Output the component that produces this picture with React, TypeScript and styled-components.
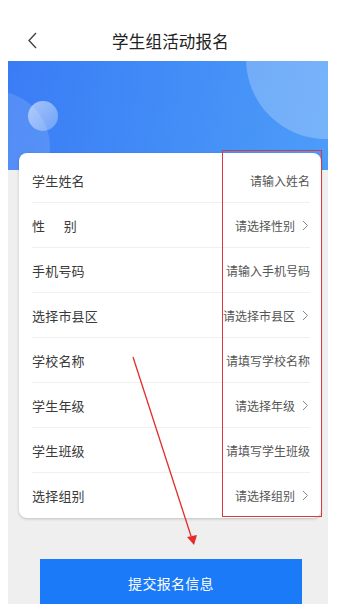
import React from "react";
import styled, { createGlobalStyle } from "styled-components";

const GlobalStyle = createGlobalStyle`
  body {
    margin: 0;
    background: #fff;
    font-family: "Noto Sans CJK SC", "Noto Sans", sans-serif;
  }
`;

const Page = styled.div`
  position: relative;
  width: 337px;
  height: 610px;
  overflow: hidden;
  background: #fff;
`;

const Header = styled.div`
  position: relative;
  height: 61px;
  display: flex;
  align-items: center;
  justify-content: center;
  box-sizing: border-box;
  padding-top: 20px;
`;

const Back = styled.div`
  position: absolute;
  left: 26px;
  top: 31px;
  width: 14px;
  height: 20px;
`;

const Title = styled.h1`
  margin: 0;
  padding-left: 4px;
  font-size: 16.5px;
  font-weight: 400;
  color: #222;
  letter-spacing: 0.2px;
`;

const Main = styled.div`
  margin: 0 9px 0 8px;
  height: 543px;
  overflow: hidden;
  background: #efefef;
`;

const Banner = styled.div`
  position: relative;
  height: 109px;
  background: linear-gradient(100deg, #3a7cf5 0%, #438ef7 55%, #4d9cf8 100%);
  overflow: hidden;

  svg {
    position: absolute;
    inset: 0;
  }
`;

const Card = styled.div`
  position: relative;
  margin: -17px 7px 0 11px;
  padding-top: 5px;
  background: #fff;
  border-radius: 8px;
  box-shadow: 0 1px 3px rgba(0, 0, 0, 0.2);
`;

const Row = styled.div<{ $last?: boolean }>`
  height: 45px;
  margin: 0 11px 0 13px;
  display: flex;
  align-items: center;
  justify-content: space-between;
  border-bottom: ${(p) => (p.$last ? "none" : "1px solid #f0f0f0")};
  box-sizing: border-box;
`;

const Label = styled.span`
  font-size: 13px;
  color: #3a3a3a;
  letter-spacing: 0.2px;
  white-space: pre;
`;

const Value = styled.span`
  display: flex;
  align-items: center;
  gap: 7px;
  font-size: 12px;
  color: #555;
`;

const Chevron = styled.svg`
  width: 7px;
  height: 11px;
  margin-right: 1px;
`;

const Submit = styled.button`
  display: block;
  margin: 41px 26px 0 32px;
  width: calc(100% - 58px);
  height: 50px;
  padding-bottom: 4px;
  border: none;
  background: #1b7af8;
  color: #fff;
  font-family: inherit;
  font-size: 14px;
  letter-spacing: 0.3px;
`;

const Highlight = styled.div`
  position: absolute;
  left: 222px;
  top: 150px;
  width: 100px;
  height: 367px;
  border: 1.6px solid #d63a40;
  box-sizing: border-box;
`;

const Pointer = styled.svg`
  position: absolute;
  left: 0;
  top: 0;
  pointer-events: none;
`;

const rows: { label: string; value: string; arrow?: boolean }[] = [
  { label: "学生姓名", value: "请输入姓名" },
  { label: "性      别", value: "请选择性别", arrow: true },
  { label: "手机号码", value: "请输入手机号码" },
  { label: "选择市县区", value: "请选择市县区", arrow: true },
  { label: "学校名称", value: "请填写学校名称" },
  { label: "学生年级", value: "请选择年级", arrow: true },
  { label: "学生班级", value: "请填写学生班级" },
  { label: "选择组别", value: "请选择组别", arrow: true },
];

const App = () => {
  return (
    <Page>
      <GlobalStyle />
      <Header>
        <Back>
          <svg width="14" height="20" viewBox="0 0 14 20">
            <path d="M10 2 L3 9.5 L10 17" fill="none" stroke="#444" strokeWidth="1.4" />
          </svg>
        </Back>
        <Title>学生组活动报名</Title>
      </Header>
      <Main>
        <Banner>
          <svg width="320" height="109" viewBox="0 0 320 109">
            <defs>
              <linearGradient id="dot" x1="0" y1="0" x2="1" y2="1">
                <stop offset="0" stopColor="#ffffff" stopOpacity="0.55" />
                <stop offset="1" stopColor="#ffffff" stopOpacity="0.25" />
              </linearGradient>
            </defs>
            <circle cx="318" cy="-2" r="80" fill="#ffffff" fillOpacity="0.24" />
            <circle cx="-14" cy="86" r="56" fill="#ffffff" fillOpacity="0.13" />
            <circle cx="35" cy="55" r="15" fill="url(#dot)" />
          </svg>
        </Banner>
        <Card>
          {rows.map((r, i) => (
            <Row key={r.label} $last={i === rows.length - 1}>
              <Label>{r.label}</Label>
              <Value>
                {r.value}
                {r.arrow && (
                  <Chevron viewBox="0 0 7 11">
                    <path d="M1 1 L5.5 5.5 L1 10" fill="none" stroke="#888" strokeWidth="1" />
                  </Chevron>
                )}
              </Value>
            </Row>
          ))}
        </Card>
        <Submit>提交报名信息</Submit>
      </Main>
      <Highlight />
      <Pointer width="337" height="610" viewBox="0 0 337 610">
        <line x1="133" y1="357" x2="191" y2="536" stroke="#e52b2b" strokeWidth="1.3" />
        <polygon points="187,537 197,535 194,545" fill="#e52b2b" />
      </Pointer>
    </Page>
  );
};

export default App;
